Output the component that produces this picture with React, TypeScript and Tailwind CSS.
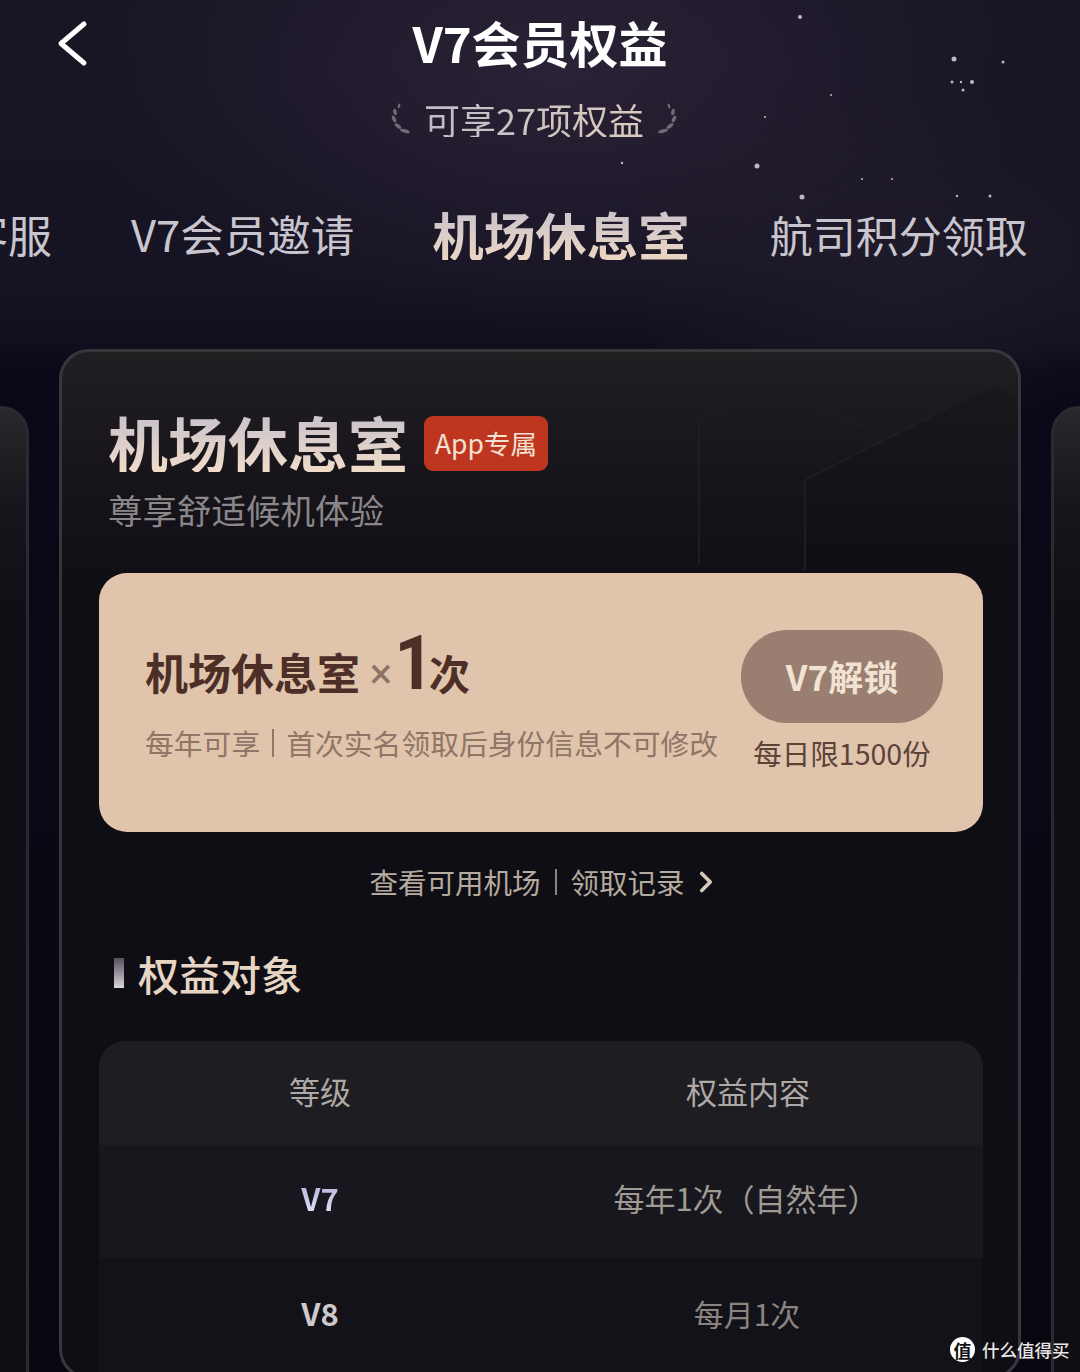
import { ChevronRight } from "lucide-react";

const stars = [
  [800, 17, 2], [954, 59, 2.5], [1003, 62, 1.5], [952, 82, 1.5], [961, 82, 1.2], [972, 82, 2],
  [963, 90, 1.5], [831, 95, 1], [765, 117, 1], [622, 163, 1.2], [757, 166, 2.5],
  [862, 179, 1], [892, 179, 1], [802, 197, 2.5], [957, 196, 1.2], [990, 196, 1.5],
];

function Laurel({ flip }: { flip?: boolean }) {
  return (
    <svg width="22" height="32" viewBox="0 0 22 32" className={flip ? "-scale-x-100" : ""} fill="#6f6c78">
      <ellipse cx="9" cy="3" rx="1.2" ry="2.5" transform="rotate(15 9 3)" />
      <ellipse cx="5" cy="9" rx="1.8" ry="3.2" transform="rotate(-10 5 9)" />
      <ellipse cx="4" cy="16" rx="1.8" ry="3.6" transform="rotate(-25 4 16)" />
      <ellipse cx="8" cy="23" rx="1.8" ry="4" transform="rotate(-50 8 23)" />
      <ellipse cx="15" cy="28" rx="1.8" ry="5" transform="rotate(-75 15 28)" />
    </svg>
  );
}

function SideCard() {
  return (
    <div className="mt-[57px] h-[1000px] w-[400px] shrink-0 rounded-[28px] border-[3px] border-[#2b2a31] bg-[linear-gradient(180deg,#2a272c_0%,#17141b_10%,#100e15_22%)]" />
  );
}

export default function App() {
  return (
    <div className="relative h-[1372px] w-[1080px] overflow-hidden bg-[radial-gradient(ellipse_480px_260px_at_560px_70px,#2a2236_0%,transparent_100%),radial-gradient(ellipse_300px_180px_at_900px_260px,#1f1a28_0%,transparent_100%),linear-gradient(180deg,#181524_0%,#161322_20%,#110f1e_25%,#0a0918_27%,#08070f_100%)] font-['Noto_Sans_CJK_SC','Noto_Sans',sans-serif]">
      {/* starfield */}
      <svg className="absolute inset-0 blur-[0.5px]" width="1080" height="340" viewBox="0 0 1080 340">
        {stars.map(([x, y, r], i) => (
          <circle key={i} cx={x} cy={y} r={r} fill="#d9d5e0" opacity="0.85" />
        ))}
      </svg>

      <div className="relative">
        <header className="relative flex h-[82px] items-center justify-center">
          <svg className="absolute left-[56px] top-[20px]" width="32" height="47" viewBox="0 0 32 47" fill="none" stroke="#fff" strokeWidth="5" strokeLinecap="round" strokeLinejoin="round">
            <path d="M28 4 L5 23.5 L28 43" />
          </svg>
          <h1 className="text-[49px] font-semibold leading-none text-white">V7会员权益</h1>
        </header>

        <div className="mt-[12px] flex h-[50px] items-center justify-center gap-[12px] pr-[12px]">
          <Laurel />
          <span className="bg-gradient-to-r from-[#c0bcc8] to-[#dccabc] bg-clip-text text-[36px] leading-none text-transparent">可享27项权益</span>
          <Laurel flip />
        </div>

        <nav className="mt-[50px] flex h-[80px] items-center whitespace-nowrap">
          <span className="-ml-[36px] text-[44px] leading-none text-[#c9c5cf]">客服</span>
          <span className="ml-[79px] text-[43.5px] leading-none text-[#c9c5cf]">V7会员邀请</span>
          <span className="ml-[78px] bg-gradient-to-b from-[#c9c3cc] to-[#ecd6c2] bg-clip-text text-[51.5px] font-bold leading-none text-transparent">机场休息室</span>
          <span className="ml-[80px] text-[43px] leading-none text-[#c9c5cf]">航司积分领取</span>
        </nav>

        <div className="mt-[75px] flex justify-center gap-[30px]">
          <SideCard />

          <main className="relative h-[1030px] w-[962px] shrink-0 overflow-hidden rounded-[30px] border-[3px] border-[#37363d] bg-[linear-gradient(180deg,#221f23_0%,#17141b_12%,#100e15_24%)] pl-[37px] pr-[35px] pt-[60px]">
            {/* hexagon decoration */}
            <svg className="absolute left-0 top-0" width="956" height="230" viewBox="0 0 956 230" fill="none">
              <defs>
                <linearGradient id="hex" x1="0" y1="0" x2="0" y2="1">
                  <stop offset="0" stopColor="#1a171d" />
                  <stop offset="1" stopColor="#100e15" />
                </linearGradient>
              </defs>
              <path d="M743 222 L743 128 L931 33 L956 43 L956 222 Z" fill="url(#hex)" />
              <path d="M637 213 L637 68 L716 33 L805 78 M743 218 L743 128 L931 33 L956 43" stroke="#1f1d24" strokeWidth="2" />
            </svg>

            <div className="relative px-[9px]">
              <div className="flex items-center">
                <h2 className="bg-gradient-to-b from-[#c7c1cc] to-[#f0dcc8] bg-clip-text text-[60px] font-bold leading-none text-transparent">机场休息室</h2>
                <span className="relative top-px ml-[16px] flex h-[55px] w-[124px] items-center justify-center rounded-[9px] bg-[#bf3620] text-[26.5px] text-[#f3e2d4]">App专属</span>
              </div>
              <p className="mt-[13px] text-[34.5px] leading-[48px] text-[#8a8689]">尊享舒适候机体验</p>
            </div>

            <section className="relative mt-[40px] flex h-[259px] items-start justify-between rounded-[28px] bg-[#e0c5ac] pl-[46px] pr-[40px]">
              <div className="pt-[50px]">
                <div className="flex h-[70px] items-end font-bold leading-none text-[#4d2f28]">
                  <span className="text-[43px]">机场休息室</span>
                  <span className="ml-[9px] flex w-[24px] translate-y-[2px] justify-center font-['Roboto'] text-[42px] font-normal text-[#8d7466]">×</span>
                  <span className="ml-[9px] flex w-[24px] translate-y-[5px] scale-x-90 justify-center font-['Roboto'] text-[76px] leading-[70px]">1</span>
                  <span className="ml-[3px] text-[41px]">次</span>
                </div>
                <div className="mt-[30px] flex h-[40px] items-center whitespace-nowrap text-[28.8px] text-[#8f7666]">
                  <span>每年可享</span>
                  <span className="mx-[12px] h-[28px] w-[2px] bg-[#8f7666]" />
                  <span>首次实名领取后身份信息不可修改</span>
                </div>
              </div>
              <div className="flex flex-col items-center pt-[57px]">
                <div className="flex h-[93px] w-[202px] items-center justify-center rounded-[46px] bg-[#9a7f70] text-[35px] font-bold text-[#f2e2d3]">V7解锁</div>
                <span className="mt-[8px] text-[28.5px] leading-[44px] text-[#5c4339]">每日限1500份</span>
              </div>
            </section>

            <div className="relative mt-[28px] flex h-[44px] items-center justify-center pl-[10px] text-[28.5px] text-[#b5aa9f]">
              <span>查看可用机场</span>
              <span className="mx-[14px] h-[26px] w-[2px] bg-[#8a827b]" />
              <span>领取记录</span>
              <ChevronRight className="ml-[4px] h-[34px] w-[34px] text-[#d7c9ba]" strokeWidth={2.6} />
            </div>

            <div className="relative mt-[39px] flex h-[60px] items-center pl-[15px]">
              <span className="h-[30px] w-[10px] bg-gradient-to-b from-[#57525c] to-[#dcd6de]" />
              <h3 className="ml-[14px] text-[41px] font-medium leading-none text-[#e6d5c3]">权益对象</h3>
            </div>

            <div className="relative mt-[38px] overflow-hidden rounded-t-[26px] text-center">
              <div className="grid h-[104px] grid-cols-[442px_1fr] items-center bg-[#1e1d22] pb-[4px] text-[31px] text-[#aea8a6]">
                <span>等级</span>
                <span className="pr-[28px]">权益内容</span>
              </div>
              <div className="grid h-[113px] grid-cols-[442px_1fr] items-center bg-[#18171d] pb-[6px]">
                <span className="bg-gradient-to-b from-[#a8a8d8] to-[#eeeefa] bg-clip-text text-[31px] font-semibold text-transparent">V7</span>
                <span className="pr-[32px] text-[31px] text-[#a09a94]">每年1次（自然年）</span>
              </div>
              <div className="grid h-[114px] grid-cols-[442px_1fr] items-center bg-[#131218] pb-[4px]">
                <span className="text-[31px] font-semibold text-[#cfc8cc]">V8</span>
                <span className="pr-[30px] text-[30px] text-[#8a8582]">每月1次</span>
              </div>
            </div>
          </main>

          <SideCard />
        </div>
      </div>

      {/* watermark */}
      <div className="absolute left-[950px] top-[1337px] flex items-center gap-[7px]">
        <span className="flex h-[25px] w-[25px] items-center justify-center rounded-full bg-white text-[18px] font-bold leading-none text-[#111]">值</span>
        <span className="text-[17.5px] font-medium leading-none text-[#e6e6e6]">什么值得买</span>
      </div>
    </div>
  );
}
